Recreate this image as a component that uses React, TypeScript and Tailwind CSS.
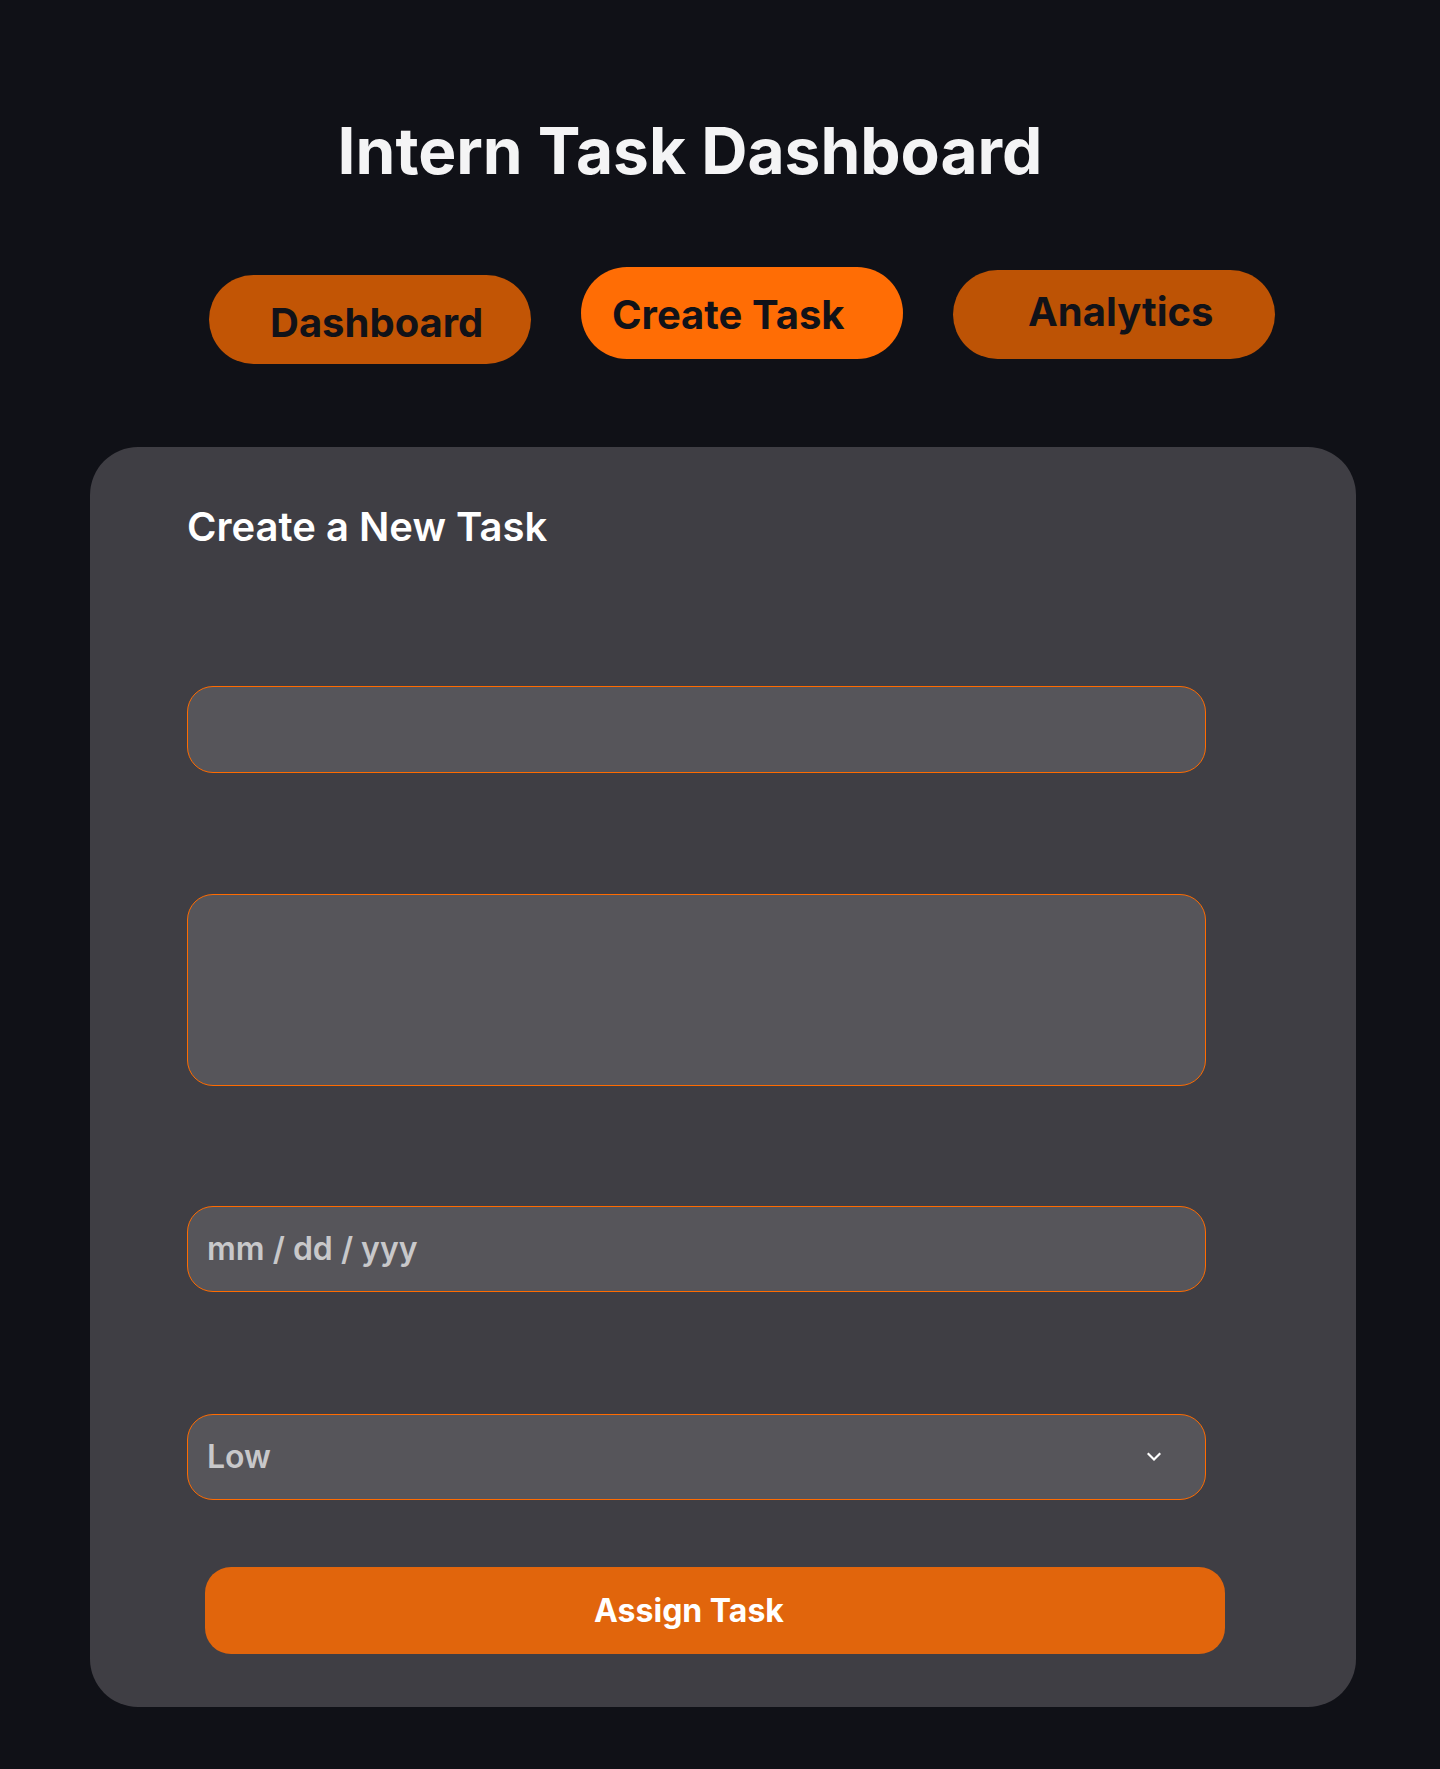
import React from "react";

export default function App() {
  return (
    <div className="min-h-[1769px] w-full bg-[#101117] font-['Inter',sans-serif] pt-[119px] pb-[62px]">
      <div className="flex justify-center pr-[60px]">
        <h1 className="text-[64px] leading-[64px] font-bold text-[#f4f4f5]">Intern Task Dashboard</h1>
      </div>

      <nav className="mt-[84px] flex items-start justify-center gap-[50px] pl-[44px]">
        <button className="mt-[8px] flex h-[89px] w-[322px] items-start rounded-full bg-[#c25505] pl-[61px] pt-[28px] text-[40px] leading-[40px] font-bold text-[#111218]">
          Dashboard
        </button>
        <button className="flex h-[92px] w-[322px] items-start rounded-full bg-[#ff6d05] pl-[31px] pt-[28px] text-[40px] leading-[40px] font-bold text-[#111218]">
          Create Task
        </button>
        <button className="mt-[3px] flex h-[89px] w-[322px] items-start rounded-full bg-[#bd5305] pl-[75px] pt-[22px] text-[40px] leading-[40px] font-bold text-[#111218]">
          Analytics
        </button>
      </nav>

      <section className="mt-[83px] ml-[90px] w-[1266px] rounded-[48px] bg-[#3f3e44] pl-[97px] pt-[60px] pb-[53px]">
        <h2 className="text-[40px] leading-[40px] font-semibold text-white">Create a New Task</h2>

        <div className="mt-[139px] h-[87px] w-[1019px] rounded-[26px] border border-[#ff6b00] bg-[#56555a]" />

        <div className="mt-[121px] h-[192px] w-[1019px] rounded-[26px] border border-[#ff6b00] bg-[#56555a]" />

        <div className="mt-[120px] flex h-[86px] w-[1019px] items-center rounded-[26px] border border-[#ff6b00] bg-[#56555a] pl-[19px]">
          <span className="text-[32px] leading-[40px] font-semibold text-[#c8c8ca]">mm / dd / yyy</span>
        </div>

        <div className="mt-[122px] flex h-[86px] w-[1019px] items-center justify-between rounded-[26px] border border-[#ff6b00] bg-[#56555a] pl-[19px] pr-[44px]">
          <span className="text-[32px] leading-[40px] font-semibold text-[#c8c8ca]">Low</span>
          <svg width="14" height="10" viewBox="0 0 14 10" fill="none">
            <polyline points="1.5,2 7,7.5 12.5,2" stroke="white" strokeWidth="2.2" strokeLinecap="square" />
          </svg>
        </div>

        <button className="ml-[18px] mt-[67px] flex h-[87px] w-[1020px] items-center justify-center rounded-[26px] bg-[#e1650c] pr-[52px] text-[32px] font-bold text-white">
          Assign Task
        </button>
      </section>
    </div>
  );
}
